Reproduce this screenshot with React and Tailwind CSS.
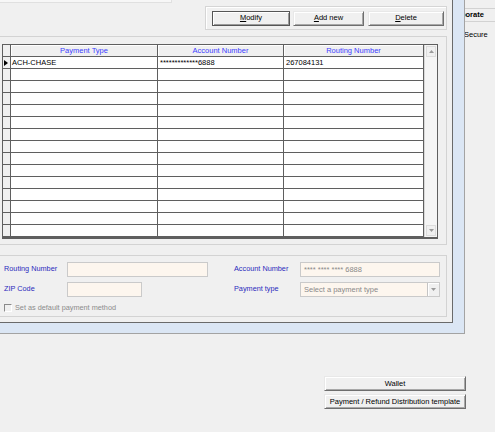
import React from "react";

const font = { fontFamily: '"Liberation Sans", Arial, sans-serif' };

function WinButton({ children, focused, className = "" }) {
  return (
    <button
      className={
        "h-[15px] flex items-center justify-center bg-[#f0f0f0] text-[7.5px] text-black leading-none " +
        (focused
          ? "border border-[#555555] shadow-[inset_1px_1px_0_#ffffff,inset_-1px_-1px_0_#9a9a9a] "
          : "border border-t-[#e8e8e8] border-l-[#e8e8e8] border-r-[#6e6e6e] border-b-[#6e6e6e] shadow-[inset_1px_1px_0_#ffffff,inset_-1px_-1px_0_#a8a8a8] ") +
        className
      }
    >
      {children}
    </button>
  );
}

function Arrow({ down }) {
  return (
    <svg width="5" height="3" viewBox="0 0 5 3">
      {down ? (
        <polygon points="0,0 5,0 2.5,3" fill="#9a9a9a" />
      ) : (
        <polygon points="0,3 5,3 2.5,0" fill="#9a9a9a" />
      )}
    </svg>
  );
}

const rows = [
  { type: "ACH-CHASE", account: "*************6888", routing: "267084131" },
  ...Array.from({ length: 14 }, () => ({ type: "", account: "", routing: "" })),
];

function Grid() {
  return (
    <div className="ml-[2px] w-[436px] flex border border-[#5f5f5f] border-b-2 bg-white">
      <div className="w-[421px]">
        <div className="h-[12px] flex bg-[#f0f0f0] border-b border-[#5f5f5f] text-[7.5px] text-[#3d3dff]">
          <div className="w-[8px] border-r border-[#5f5f5f]" />
          <div className="w-[147px] border-r border-[#5f5f5f] flex items-center justify-center shadow-[inset_1px_1px_0_#ffffff]">
            Payment Type
          </div>
          <div className="w-[126px] border-r border-[#5f5f5f] flex items-center justify-center shadow-[inset_1px_1px_0_#ffffff]">
            Account Number
          </div>
          <div className="w-[140px] border-r border-[#5f5f5f] flex items-center justify-center shadow-[inset_1px_1px_0_#ffffff]">
            Routing Number
          </div>
        </div>
        {rows.map((r, i) => (
          <div key={i} className="h-[12px] flex border-b border-[#5f5f5f] text-[7.5px] text-black">
            <div className="w-[8px] border-r border-[#5f5f5f] bg-[#f0f0f0] flex items-center pl-[1px]">
              {i === 0 && (
                <svg width="4" height="6" viewBox="0 0 4 6">
                  <polygon points="0,0 4,3 0,6" fill="#000" />
                </svg>
              )}
            </div>
            <div className="w-[147px] border-r border-[#5f5f5f] flex items-center pl-[1px]">{r.type}</div>
            <div className="w-[126px] border-r border-[#5f5f5f] flex items-center pl-[2px]">{r.account}</div>
            <div className="w-[140px] border-r border-[#5f5f5f] flex items-center pl-[2px]">{r.routing}</div>
          </div>
        ))}
      </div>
      <div className="flex-1 bg-[#f5f5f5] border-l border-[#d8d8d8] flex flex-col justify-between">
        <div className="h-[11px] mx-[1px] mt-[1px] border border-[#dcdcdc] bg-[#f0f0f0] flex items-center justify-center">
          <Arrow />
        </div>
        <div className="h-[11px] mx-[1px] mb-[1px] border border-[#dcdcdc] bg-[#f0f0f0] flex items-center justify-center">
          <Arrow down />
        </div>
      </div>
    </div>
  );
}

function Input({ w, value, select }) {
  return (
    <div
      className={
        "h-[15px] border border-[#cacaca] bg-[#fdf6ee] flex items-center text-[7.5px] text-[#8a8a8a] pl-[3px] " + w
      }
    >
      <span className="flex-1">{value}</span>
      {select && (
        <div className="w-[12px] h-[13px] border-l border-[#c4c4c4] bg-[#f0f0f0] flex items-center justify-center shadow-[inset_1px_1px_0_#ffffff]">
          <Arrow down />
        </div>
      )}
    </div>
  );
}

export default function App() {
  return (
    <div className="w-[495px] h-[432px] bg-[#f0f0f0] overflow-hidden" style={font}>
      <div className="flex">
        <div className="w-[465px] h-[334px] shrink-0 bg-[#dbe6f4] border-r border-b border-[#a3a3a3]">
          <div className="w-[453px] h-[323px] bg-[#f0f0f0] border-r border-b border-[#6a6a6a]">
            <div className="h-[36px] flex items-start">
              <div className="w-[172px] h-[3px] bg-[#f7f7f7] border-b border-r border-[#e0e0e0]" />
              <div className="ml-[33px] mt-[6px] w-[242px] h-[24px] border border-[#d5d5d5] shadow-[inset_1px_1px_0_#ffffff] flex items-center pl-[6px]">
                <WinButton focused className="w-[78px]">
                  <span><span className="underline">M</span>odify</span>
                </WinButton>
                <WinButton className="w-[71px] ml-[3px]">
                  <span><span className="underline">A</span>dd new</span>
                </WinButton>
                <WinButton className="w-[76px] ml-[4px]">
                  <span><span className="underline">D</span>elete</span>
                </WinButton>
              </div>
            </div>
            <div className="w-[447px] h-[209px] border-t border-r border-b border-[#d3d3d3] pt-[7px]">
              <Grid />
            </div>
            <div className="mt-[10px] w-[447px] h-[62px] border-t border-r border-b border-[#d3d3d3] pt-[6px] pl-[4px]">
              <div className="flex items-center h-[15px]">
                <div className="w-[63px] text-[7.3px] text-[#2b2bbd]">Routing Number</div>
                <Input w="w-[141px]" />
                <div className="ml-[26px] w-[66px] text-[7.3px] text-[#2b2bbd]">Account Number</div>
                <Input w="w-[140px]" value="**** **** **** 6888" />
              </div>
              <div className="flex items-center h-[15px] mt-[5px]">
                <div className="w-[63px] text-[7.3px] text-[#2b2bbd]">ZIP Code</div>
                <Input w="w-[75px]" />
                <div className="ml-[92px] w-[66px] text-[7.3px] text-[#2b2bbd]">Payment type</div>
                <Input w="w-[140px]" value="Select a payment type" select />
              </div>
              <div className="flex items-center mt-[6px]">
                <div className="w-[8px] h-[8px] border border-t-[#8a8a8a] border-l-[#8a8a8a] border-r-white border-b-white bg-[#f0f0f0]" />
                <span className="ml-[3px] text-[7.3px] text-[#8c8c8c]">Set as default payment method</span>
              </div>
            </div>
          </div>
        </div>
        <div className="flex-1 overflow-hidden">
          <div className="mt-[8px] h-[14px] border-y border-[#d2d2d2] flex items-center overflow-hidden whitespace-nowrap">
            <span className="-ml-[17px] text-[7.5px] font-bold text-black">Corporate</span>
          </div>
          <div className="mt-[7px] whitespace-nowrap text-[7.5px] text-black -ml-[1px]">Secure</div>
        </div>
      </div>
      <div className="ml-[324px] mt-[42px] w-[142px] flex flex-col gap-[3px]">
        <WinButton className="w-[142px] h-[14px]">Wallet</WinButton>
        <WinButton className="w-[142px]">Payment / Refund Distribution template</WinButton>
      </div>
    </div>
  );
}
